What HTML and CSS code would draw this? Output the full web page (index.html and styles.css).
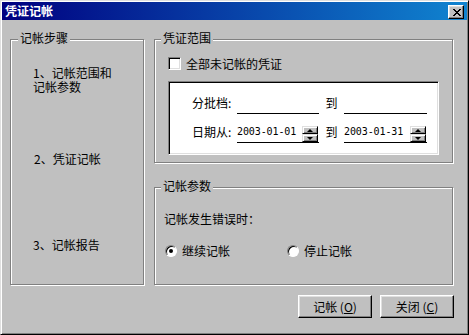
FILE: index.html
```html
<!DOCTYPE html>
<html lang="zh-CN">
<head>
<meta charset="utf-8">
<title>凭证记帐</title>
<link rel="stylesheet" href="styles.css">
</head>
<body>
<div class="window">
  <div class="titlebar">
    <span class="title">凭证记帐</span>
    <span class="close-btn"><svg width="8" height="7" viewBox="0 0 8 7" shape-rendering="crispEdges"><path fill="#000" d="M0 0h2v1h-2z M6 0h2v1h-2z M1 1h2v1h-2z M5 1h2v1h-2z M2 2h4v1h-4z M3 3h2v1h-2z M2 4h4v1h-4z M1 5h2v1h-2z M5 5h2v1h-2z M0 6h2v1h-2z M6 6h2v1h-2z"/></svg></span>
  </div>
  <div class="client">
    <div class="main">
      <div class="group group-steps">
        <span class="legend">记帐步骤</span>
        <div class="step step1"><div class="line">1、记帐范围和</div><div class="line">记帐参数</div></div>
        <div class="step step2">2、凭证记帐</div>
        <div class="step step3">3、记帐报告</div>
      </div>
      <div class="right-col">
        <div class="group group-range">
          <span class="legend">凭证范围</span>
          <div class="check-row">
            <span class="checkbox"></span>
            <span class="check-label">全部未记帐的凭证</span>
          </div>
          <div class="white-box">
            <div class="field-row">
              <span class="field-label">分批档:</span>
              <span class="field"></span>
              <span class="to">到</span>
              <span class="field field-b"></span>
            </div>
            <div class="field-row row2">
              <span class="field-label">日期从:</span>
              <span class="field">
                <span class="date">2003-01-01</span>
                <span class="spin"><span class="spin-btn up"></span><span class="spin-btn down"></span></span>
              </span>
              <span class="to">到</span>
              <span class="field field-b">
                <span class="date">2003-01-31</span>
                <span class="spin"><span class="spin-btn up"></span><span class="spin-btn down"></span></span>
              </span>
            </div>
          </div>
        </div>
        <div class="group group-params">
          <span class="legend">记帐参数</span>
          <div class="param-text">记帐发生错误时：</div>
          <div class="radio-row">
            <span class="radio-item first"><span class="radio checked"></span><span>继续记帐</span></span>
            <span class="radio-item"><span class="radio"></span><span>停止记帐</span></span>
          </div>
        </div>
      </div>
    </div>
    <div class="buttons">
      <span class="btn">记帐 (<u>O</u>)</span>
      <span class="btn">关闭 (<u>C</u>)</span>
    </div>
  </div>
</div>
</body>
</html>
```
FILE: styles.css
```css
html, body {
  margin: 0;
  padding: 0;
}
body {
  background: #c0c0c0;
  font-family: "Noto Sans CJK SC", "Noto Sans", sans-serif;
  font-size: 12px;
  line-height: 14px;
  color: #000;
}
.window {
  width: 469px;
  height: 335px;
  box-sizing: border-box;
  border: 1px solid;
  border-color: #dfdfdf #000 #000 #dfdfdf;
  box-shadow: inset 1px 1px #fff, inset -1px -1px #808080;
  padding: 1px;
  background: #c0c0c0;
  display: flex;
  flex-direction: column;
}
.titlebar {
  height: 18px;
  flex: none;
  background: linear-gradient(to right, #000080, #1084d0);
  display: flex;
  align-items: center;
  justify-content: space-between;
  padding: 0 3px 0 3px;
}
.title {
  color: #fff;
  font-weight: bold;
}
.close-btn {
  width: 16px;
  height: 14px;
  box-sizing: border-box;
  background: #c0c0c0;
  border: 1px solid;
  border-color: #fff #000 #000 #fff;
  box-shadow: inset -1px -1px #808080, inset 1px 1px #dfdfdf;
  display: flex;
  align-items: center;
  justify-content: center;
  padding-left: 1px;
  margin-top: 2px;
}
.close-btn svg {
  display: block;
}
.client {
  padding: 19px 13px 0 8px;
}
.main {
  display: flex;
  gap: 10px;
}
.group {
  position: relative;
  box-sizing: border-box;
  border: 1px solid #808080;
  box-shadow: 1px 1px 0 #fff, inset 1px 1px 0 #fff;
}
.legend {
  position: absolute;
  top: -9px;
  left: 6px;
  padding: 0 2px;
  background: #c0c0c0;
  white-space: nowrap;
}
.group-steps {
  width: 134px;
  height: 246px;
  padding: 26px 0 0 22px;
}
.group-steps .legend {
  left: 7px;
}
.step1 .line {
  line-height: 14px;
  height: 14px;
}
.step2 {
  margin-top: 58px;
  margin-left: 1px;
}
.step3 {
  margin-top: 72px;
}
.right-col {
  width: 299px;
  display: flex;
  flex-direction: column;
  gap: 24px;
}
.group-range {
  height: 124px;
  padding: 17px 0 0 13px;
}
.check-row {
  display: flex;
  align-items: center;
  height: 13px;
  gap: 5px;
}
.checkbox {
  width: 13px;
  height: 13px;
  box-sizing: border-box;
  background: #fff;
  border: 1px solid;
  border-color: #808080 #fff #fff #808080;
  box-shadow: inset 1px 1px #000, inset -1px -1px #dfdfdf;
}
.white-box {
  margin-top: 11px;
  width: 271px;
  height: 74px;
  box-sizing: border-box;
  background: #fff;
  border: 1px solid;
  border-color: #808080 #fff #fff #808080;
  box-shadow: inset 1px 1px #000, inset -1px -1px #dfdfdf;
  padding: 14px 0 0 23px;
}
.field-row {
  display: flex;
  align-items: flex-start;
  height: 18px;
}
.row2 {
  margin-top: 11px;
}
.field-label {
  width: 45px;
  white-space: nowrap;
}
.field {
  width: 82px;
  height: 18px;
  box-sizing: border-box;
  border-bottom: 1px solid #000;
  display: flex;
  justify-content: space-between;
  align-items: flex-start;
}
.field-b {
  width: 83px;
}
.to {
  width: 25px;
  text-align: center;
}
.date {
  font-family: "DejaVu Sans Mono", monospace;
  font-size: 10px;
  line-height: 14px;
  letter-spacing: -0.1px;
}
.spin {
  width: 16px;
  height: 16px;
  margin: 1px 1px 0 0;
  display: flex;
  flex-direction: column;
}
.spin-btn {
  flex: 1;
  box-sizing: border-box;
  background: #c0c0c0;
  border: 1px solid;
  border-color: #dfdfdf #000 #000 #dfdfdf;
  box-shadow: inset 1px 1px #fff, inset -1px -1px #808080;
  display: flex;
  align-items: center;
  justify-content: center;
}
.spin-btn.up::after {
  content: "";
  border-left: 3px solid transparent;
  border-right: 3px solid transparent;
  border-bottom: 3px solid #000;
}
.spin-btn.down::after {
  content: "";
  border-left: 3px solid transparent;
  border-right: 3px solid transparent;
  border-top: 3px solid #000;
}
.group-params {
  height: 98px;
  padding: 24px 0 0 9px;
}
.radio-row {
  margin-top: 18px;
  display: flex;
  align-items: center;
  height: 14px;
  padding-left: 1px;
}
.radio-item {
  display: flex;
  align-items: center;
  gap: 5px;
}
.radio-item.first {
  width: 122px;
}
.radio {
  width: 12px;
  height: 12px;
  box-sizing: border-box;
  border-radius: 50%;
  background: #fff;
  border: 1px solid;
  border-color: #808080 #fff #fff #808080;
  box-shadow: inset 1px 1px #000;
  display: flex;
  align-items: center;
  justify-content: center;
}
.radio.checked::after {
  content: "";
  width: 4px;
  height: 4px;
  border-radius: 50%;
  background: #000;
}
.buttons {
  margin-top: 10px;
  display: flex;
  justify-content: flex-end;
  gap: 8px;
}
.btn {
  width: 74px;
  height: 23px;
  box-sizing: border-box;
  background: #c0c0c0;
  border: 1px solid;
  border-color: #fff #000 #000 #fff;
  box-shadow: inset -1px -1px #808080, inset 1px 1px #dfdfdf;
  display: flex;
  align-items: center;
  justify-content: center;
  white-space: pre;
}
.btn u {
  text-decoration: underline;
  text-underline-offset: 1px;
}
```
